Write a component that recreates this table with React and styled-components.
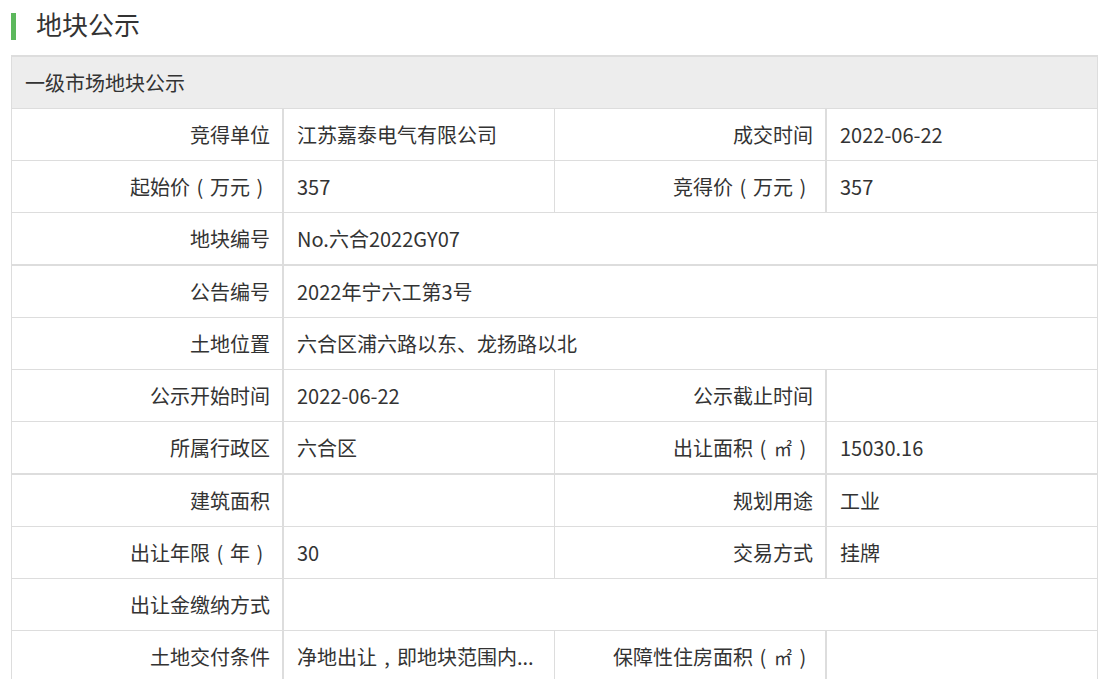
import React from "react";
import styled, { createGlobalStyle } from "styled-components";

const Global = createGlobalStyle`
  html, body { margin: 0; padding: 0; background: #fff; }
  body {
    font-family: "Noto Sans CJK SC", "Microsoft YaHei", "Noto Sans", sans-serif;
    color: #333;
  }
`;

const Page = styled.div`
  padding: 13px 17px 0 11px;
`;

const Title = styled.h2`
  margin: 0 0 15px 0;
  border-left: 5px solid #5cb85c;
  padding-left: 20px;
  padding-bottom: 5px;
  font-size: 26px;
  font-weight: normal;
  line-height: 22px;
  height: 22px;
  color: #333;
`;

const Grid = styled.div`
  display: grid;
  grid-template-columns: 272px 271px 272px 270px;
  width: 1087px;
  box-sizing: border-box;
  border-top: 2px solid #dddddd;
  border-left: 1px solid #dddddd;
  border-right: 1px solid #dddddd;
  font-size: 20px;
`;

const Head = styled.div`
  grid-column: 1 / -1;
  box-sizing: border-box;
  height: 52px;
  display: flex;
  align-items: center;
  padding-left: 13px;
  background: #ededed;
  border-bottom: 1px solid #dddddd;
`;

const Cell = styled.div`
  box-sizing: border-box;
  height: ${(p) => (p.$thickBottom ? 53 : 52)}px;
  display: flex;
  align-items: center;
  white-space: nowrap;
  overflow: hidden;
  border-bottom: ${(p) => (p.$thickBottom ? 2 : 1)}px solid #dddddd;
  border-right: ${(p) => p.$right}px solid #dddddd;
  grid-column: ${(p) => (p.$span ? `span ${p.$span}` : "auto")};
`;

const Label = styled(Cell)`
  justify-content: flex-end;
  padding-right: 12px;
`;

const Value = styled(Cell)`
  justify-content: flex-start;
  padding-left: 13px;
`;

const Punct = styled.span`
  display: inline-block;
  width: 20px;
  text-align: center;
`;

const Unit = styled.span`
  display: inline-block;
  width: 20px;
  text-align: center;
  font-size: 18px;
`;

const MAP = { "（": "(", "）": ")", "，": "," };

function Text({ children }) {
  if (!children) return null;
  const parts = [];
  let buf = "";
  [...children].forEach((ch, i) => {
    if (MAP[ch] || ch === "㎡") {
      if (buf) parts.push(buf);
      buf = "";
      parts.push(
        ch === "㎡" ? (
          <Unit key={i}>㎡</Unit>
        ) : (
          <Punct key={i}>{MAP[ch]}</Punct>
        )
      );
    } else {
      buf += ch;
    }
  });
  if (buf) parts.push(buf);
  return <>{parts}</>;
}

const rows = [
  { cells: ["竞得单位", "江苏嘉泰电气有限公司", "成交时间", "2022-06-22"] },
  { cells: ["起始价（万元）", "357", "竞得价（万元）", "357"] },
  { cells: ["地块编号", "No.六合2022GY07"], thick: true },
  { cells: ["公告编号", "2022年宁六工第3号"] },
  { cells: ["土地位置", "六合区浦六路以东、龙扬路以北"] },
  { cells: ["公示开始时间", "2022-06-22", "公示截止时间", ""] },
  { cells: ["所属行政区", "六合区", "出让面积（㎡）", "15030.16"], thick: true },
  { cells: ["建筑面积", "", "规划用途", "工业"] },
  { cells: ["出让年限（年）", "30", "交易方式", "挂牌"] },
  { cells: ["出让金缴纳方式", ""] },
  { cells: ["土地交付条件", "净地出让，即地块范围内...", "保障性住房面积（㎡）", ""] },
];

function Row({ cells, thick }) {
  if (cells.length === 2) {
    return (
      <>
        <Label $right={2} $thickBottom={thick}><Text>{cells[0]}</Text></Label>
        <Value $right={0} $span={3} $thickBottom={thick}><Text>{cells[1]}</Text></Value>
      </>
    );
  }
  return (
    <>
      <Label $right={2} $thickBottom={thick}><Text>{cells[0]}</Text></Label>
      <Value $right={1} $thickBottom={thick}><Text>{cells[1]}</Text></Value>
      <Label $right={2} $thickBottom={thick}><Text>{cells[2]}</Text></Label>
      <Value $right={0} $thickBottom={thick}><Text>{cells[3]}</Text></Value>
    </>
  );
}

export default function App() {
  return (
    <>
      <Global />
      <Page>
        <Title>地块公示</Title>
        <Grid>
          <Head>一级市场地块公示</Head>
          {rows.map((r, i) => (
            <Row key={i} cells={r.cells} thick={r.thick} />
          ))}
        </Grid>
      </Page>
    </>
  );
}
